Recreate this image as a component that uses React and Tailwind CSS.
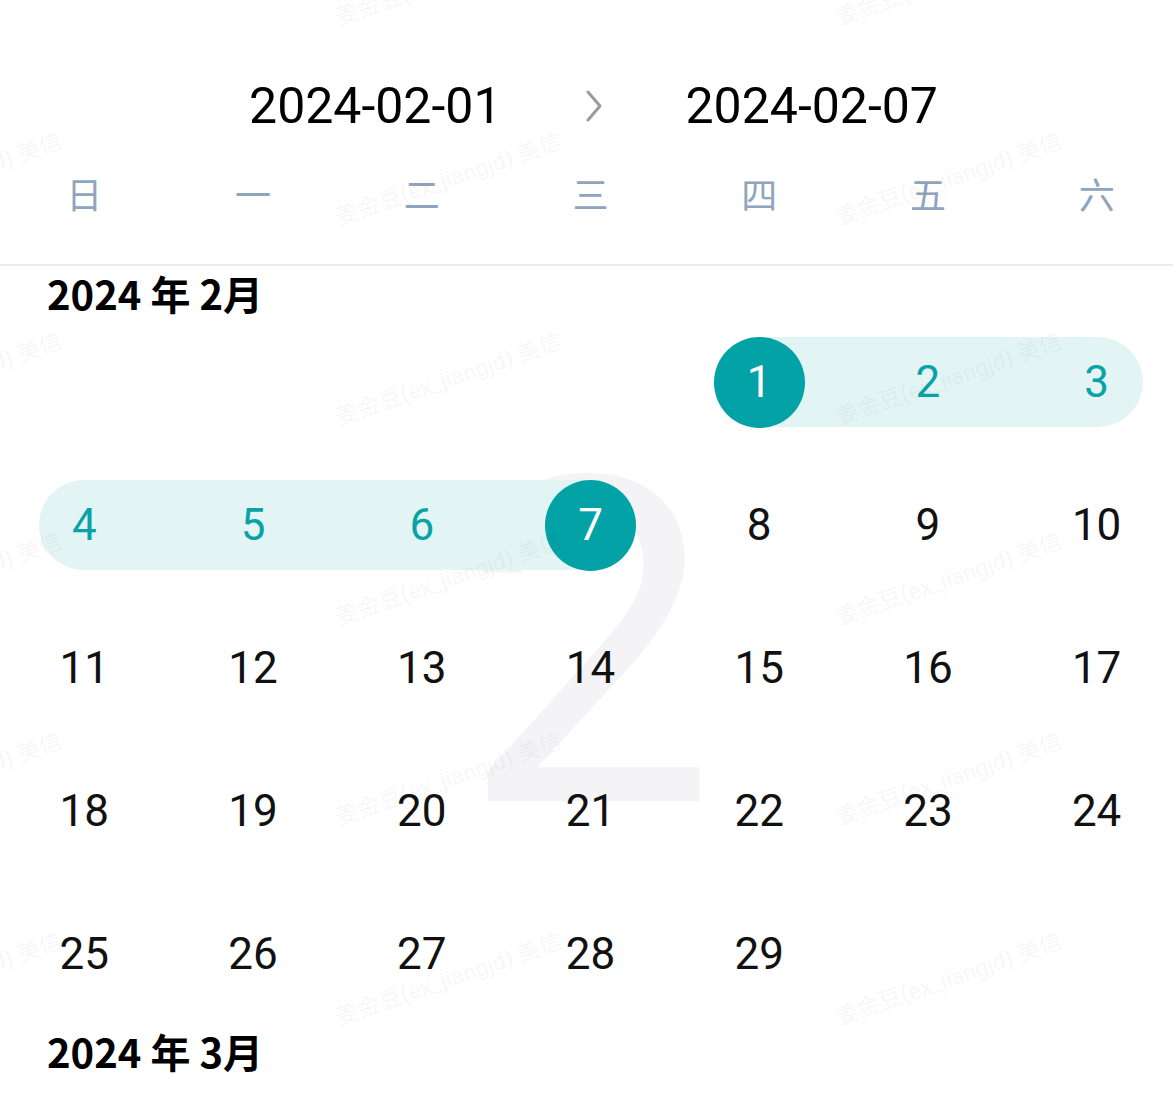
import React from "react";

const WEEK = ["日", "一", "二", "三", "四", "五", "六"];

// build cells for a month, null = empty slot before the 1st
const monthCells = (firstDay, total) => {
  const cells = [];
  for (let i = 0; i < firstDay; i++) cells.push(null);
  for (let d = 1; d <= total; d++) cells.push(d);
  return cells;
};

const START = 1;
const END = 7;

const DayCell = ({ day, col }) => {
  if (day === null) return <div className="h-[90px]" />;

  const isStart = day === START;
  const isEnd = day === END;
  const inRange = day > START && day < END;

  let band = null;
  if (isStart && col < 6) band = <div className="absolute inset-y-0 left-1/2 right-0 bg-[#e3f4f5]" />;
  if (isEnd && col > 0) band = <div className="absolute inset-y-0 left-0 right-1/2 bg-[#e3f4f5]" />;
  if (inRange) {
    if (col === 0) band = <div className="absolute inset-y-0 left-[39px] right-0 rounded-l-full bg-[#e3f4f5]" />;
    else if (col === 6) band = <div className="absolute inset-y-0 left-0 right-[38px] rounded-r-full bg-[#e3f4f5]" />;
    else band = <div className="absolute inset-0 bg-[#e3f4f5]" />;
  }

  return (
    <div className="relative h-[90px] flex items-center justify-center">
      {band}
      {(isStart || isEnd) && <div className="absolute size-[91px] rounded-full bg-[#02a2a6]" />}
      <span
        className={
          "relative text-[44px] leading-none " +
          (isStart || isEnd ? "text-white" : inRange ? "text-[#08a3a7]" : "text-[#111]")
        }
      >
        {day}
      </span>
    </div>
  );
};

const MonthTitle = ({ year, month }) => (
  <h2
    className="relative h-[60px] flex items-center pl-[47px] pb-[7px] text-[40px] font-bold text-black"
    style={{ fontFamily: '"Noto Sans CJK SC", sans-serif' }}
  >
    {year}
    <span className="mx-[9px]">年</span>
    {month}月
  </h2>
);

const Month = ({ year, month, firstDay, total, bigNum }) => {
  const cells = monthCells(firstDay, total);
  return (
    <section className="relative pb-[25px]">
      <div className="absolute inset-0 flex items-center justify-center pointer-events-none">
        <span className="text-[455px] font-normal leading-none text-[#f4f4f6] translate-x-[2px] translate-y-[0px] select-none">
          {bigNum}
        </span>
      </div>
      <MonthTitle year={year} month={month} />
      <div className="relative mt-[11px] w-[1181px] grid grid-cols-7 gap-y-[53px]">
        {cells.map((d, i) => (
          <DayCell key={i} day={d} col={i % 7} />
        ))}
      </div>
    </section>
  );
};

const Watermarks = () => {
  const marks = [];
  for (let r = 0; r < 7; r++) {
    for (const cx of [-51, 449, 949]) {
      marks.push(
        <span
          key={r + "-" + cx}
          className="absolute whitespace-nowrap text-[23px] text-black/[0.055]"
          style={{
            left: cx,
            top: -20 + r * 200,
            transform: "translate(-50%, -50%) rotate(-19deg)",
          }}
        >
          姜金豆(ex_jiangjd) 美信
        </span>
      );
    }
  }
  return <div className="absolute inset-0 z-10 pointer-events-none overflow-hidden">{marks}</div>;
};

export default function App() {
  return (
    <div
      className="relative w-full h-[1102px] overflow-hidden bg-white"
      style={{ fontFamily: 'Roboto, "Noto Sans CJK SC", sans-serif' }}
    >
      <header className="flex items-center justify-center gap-[82px] pl-[14px] pt-[62px] h-[150px]">
        <span className="text-[50px] leading-none text-black">2024-02-01</span>
        <svg width="20" height="34" viewBox="0 0 20 34" fill="none">
          <polyline points="4,3 16,17 4,31" stroke="#9b9b9b" strokeWidth="3" strokeLinecap="round" strokeLinejoin="round" />
        </svg>
        <span className="text-[50px] leading-none text-black">2024-02-07</span>
      </header>
      <div className="w-[1181px] grid grid-cols-7 h-[86px] items-center">
        {WEEK.map((w) => (
          <span
            key={w}
            className="text-center text-[36px] text-[#8ea5bd]"
            style={{ fontFamily: '"Noto Sans CJK SC", sans-serif' }}
          >
            {w}
          </span>
        ))}
      </div>
      <div className="mt-[28px] h-[2px] bg-[#e8ecf1]" />
      <Month year={2024} month={2} firstDay={4} total={29} bigNum="2" />
      <MonthTitle year={2024} month={3} />
      <Watermarks />
    </div>
  );
}
